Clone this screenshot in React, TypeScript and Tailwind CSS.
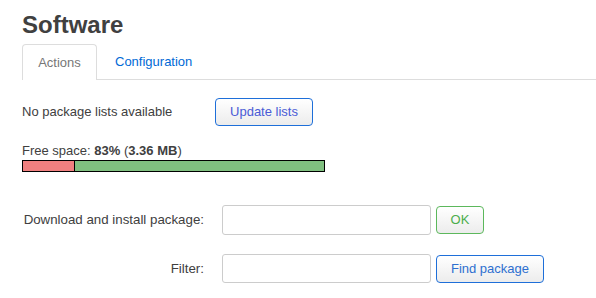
export default function App() {
  return (
    <div className="w-[596px] h-[298px] bg-white text-[#404040] font-['Liberation_Sans',Arial,sans-serif] pl-[22px] pt-[11px]">
      <h2 className="text-[24px] font-bold leading-[28px] text-[#404040]">Software</h2>

      <div className="mt-[5px] flex border-b border-[#dddddd] h-[36px]">
        <div className="w-[75px] border border-b-0 border-[#dddddd] rounded-t-[4px] bg-white flex items-center justify-center text-[13px] text-[#777777] -mb-px h-[36px]">
          Actions
        </div>
        <div className="ml-[18px] flex items-center text-[13px] text-[#0069d6]">Configuration</div>
      </div>

      <div className="mt-[18px] flex items-center h-[28px]">
        <span className="text-[13px] w-[193px]">No package lists available</span>
        <button className="h-[28px] w-[98px] rounded-[4px] border border-[#1e6fd9] bg-gradient-to-b from-white to-[#ececec] text-[13px] text-[#4a5bd6]">
          Update lists
        </button>
      </div>

      <div className="mt-[17px] text-[13px] leading-[15px]">
        Free space: <b>83%</b> (<b>3.36 MB</b>)
      </div>
      <div className="mt-[2px] w-[303px] h-[12px] border border-black flex">
        <div className="w-[52px] bg-[#f08080] border-r border-black" />
        <div className="flex-1 bg-[#80c080]" />
      </div>

      <div className="mt-[33px] flex items-center">
        <label className="w-[182px] text-right text-[13.3px]">Download and install package:</label>
        <input className="ml-[18px] w-[209px] h-[30px] border border-[#cccccc] rounded-[3px]" />
        <button className="ml-[5px] w-[48px] h-[28px] rounded-[4px] border border-[#5cb85c] bg-gradient-to-b from-white to-[#ececec] text-[13px] text-[#4cae4c]">
          OK
        </button>
      </div>

      <div className="mt-[19px] flex items-center">
        <label className="w-[182px] text-right text-[13.3px]">Filter:</label>
        <input className="ml-[18px] w-[209px] h-[29px] border border-[#cccccc] rounded-[3px]" />
        <button className="ml-[5px] w-[108px] h-[28px] rounded-[4px] border border-[#1e6fd9] bg-gradient-to-b from-white to-[#ececec] text-[13px] text-[#2e6fd0]">
          Find package
        </button>
      </div>
    </div>
  );
}
